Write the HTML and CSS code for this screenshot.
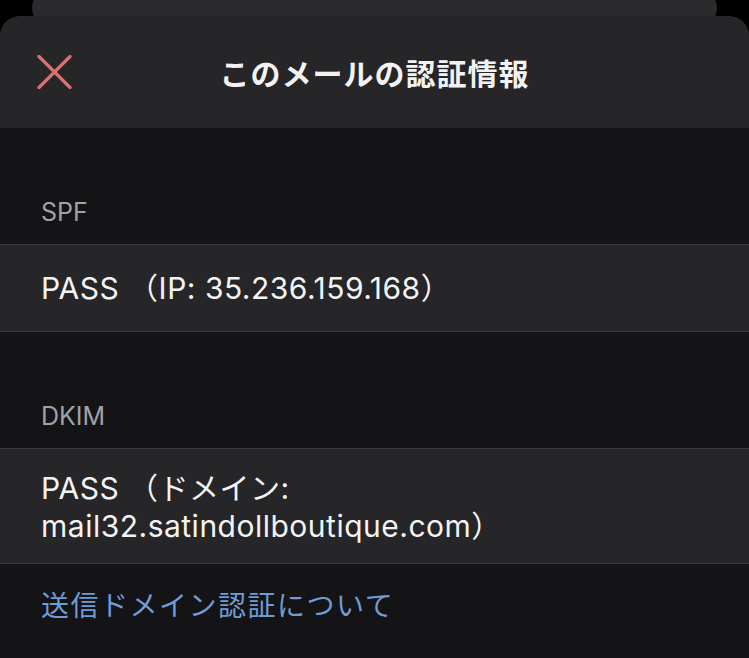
FILE: index.html
```html
<!DOCTYPE html>
<html lang="ja">
<head>
<meta charset="utf-8">
<title>このメールの認証情報</title>
<link rel="stylesheet" href="styles.css">
</head>
<body>
<div class="screen">
  <div class="back-card"></div>
  <div class="sheet">
    <header class="header">
      <button class="close" aria-label="閉じる">
        <svg width="35" height="34" viewBox="0 0 35 34" aria-hidden="true">
          <path d="M2 1.5 L33 32.5 M33 1.5 L2 32.5" stroke="#d9716d" stroke-width="3.2" stroke-linecap="round" fill="none"/>
        </svg>
      </button>
      <h1 class="title">このメールの認証情報</h1>
      <span class="spacer"></span>
    </header>

    <div class="section-label">SPF</div>
    <div class="row">PASS （IP: 35.236.159.168）</div>

    <div class="section-label">DKIM</div>
    <div class="row row-multi"><span class="wrap">PASS （ドメイン: mail32.satindollboutique.com）</span></div>

    <a class="link" href="#">送信ドメイン認証について</a>
  </div>
</div>
</body>
</html>
```

FILE: styles.css
```css
html, body {
  margin: 0;
  padding: 0;
  background: #000;
}

.screen {
  width: 749px;
  height: 658px;
  overflow: hidden;
  background: #000;
  font-family: Inter, "Noto Sans CJK JP", sans-serif;
  color: #f3f3f4;
}

.back-card {
  height: 40px;
  margin: -12px 32px -12px;
  border-radius: 20px;
  background: #2b2a2d;
}

.sheet {
  position: relative;
  height: 642px;
  background: #141315;
  border-radius: 20px 20px 0 0;
  overflow: hidden;
}

.header {
  height: 112px;
  background: #262527;
  display: grid;
  grid-template-columns: 1fr auto 1fr;
  align-items: center;
}

.close {
  justify-self: start;
  margin-left: 37px;
  padding: 0;
  border: 0;
  background: none;
  width: 35px;
  height: 34px;
  display: flex;
}

.title {
  margin: 0;
  font-family: "Noto Sans CJK JP", sans-serif;
  font-size: 30px;
  font-weight: 700;
  letter-spacing: 1px;
  line-height: 40px;
  color: #f2f2f3;
}

.section-label {
  padding: 69px 41px 17px;
  font-size: 25px;
  line-height: 30px;
  color: #a2a1a6;
}

.row {
  background: #262527;
  border-top: 1px solid #3b3a3d;
  border-bottom: 1px solid #3b3a3d;
  padding: 24px 41px;
  font-size: 30px;
  letter-spacing: 0.5px;
  line-height: 38px;
  color: #f3f3f4;
}

.row-multi {
  padding: 20px 41px 18px;
}

.wrap {
  display: block;
  max-width: 470px;
}

.link {
  display: block;
  padding: 22px 41px 0;
  font-family: "Noto Sans CJK JP", sans-serif;
  font-size: 28px;
  line-height: 36px;
  letter-spacing: 1.5px;
  color: #6f9bd6;
  text-decoration: none;
}
```
